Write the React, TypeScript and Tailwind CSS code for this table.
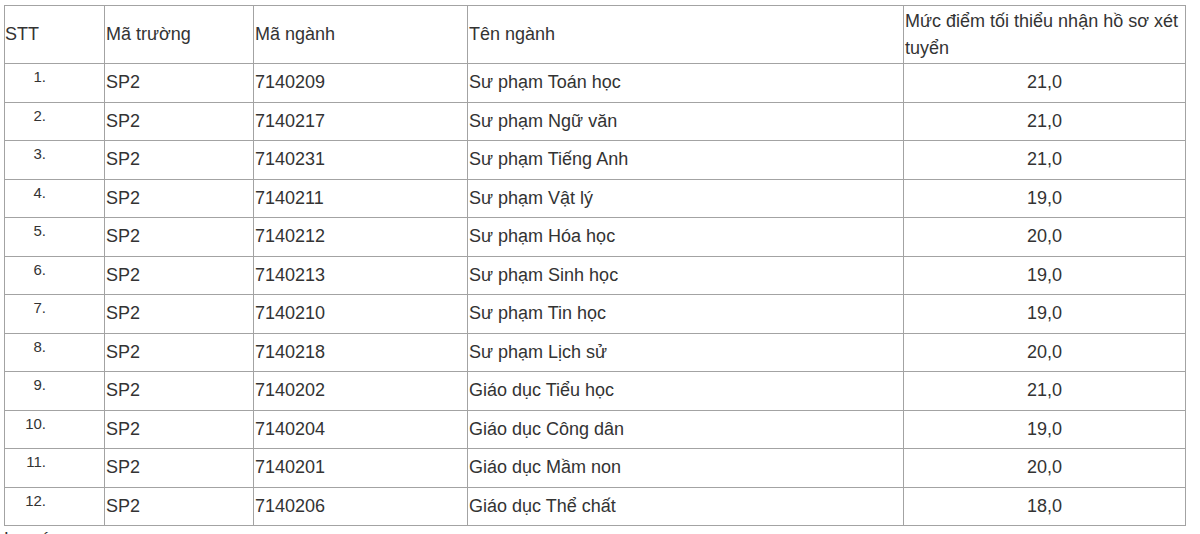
import React from "react";

const rows: [string, string, string, string][] = [
  ["1.", "7140209", "Sư phạm Toán học", "21,0"],
  ["2.", "7140217", "Sư phạm Ngữ văn", "21,0"],
  ["3.", "7140231", "Sư phạm Tiếng Anh", "21,0"],
  ["4.", "7140211", "Sư phạm Vật lý", "19,0"],
  ["5.", "7140212", "Sư phạm Hóa học", "20,0"],
  ["6.", "7140213", "Sư phạm Sinh học", "19,0"],
  ["7.", "7140210", "Sư phạm Tin học", "19,0"],
  ["8.", "7140218", "Sư phạm Lịch sử", "20,0"],
  ["9.", "7140202", "Giáo dục Tiểu học", "21,0"],
  ["10.", "7140204", "Giáo dục Công dân", "19,0"],
  ["11.", "7140201", "Giáo dục Mầm non", "20,0"],
  ["12.", "7140206", "Giáo dục Thể chất", "18,0"],
];

const cell = "border-r border-b border-[#a3a3a3] flex items-center pl-[1px]";

export default function App() {
  return (
    <div
      className="w-[1200px] h-[534px] overflow-hidden bg-white pt-[5px] pl-[4px] text-[#333333] text-[18px] leading-[27px]"
      style={{ fontFamily: '"Liberation Sans", Arial, sans-serif' }}
    >
      <div className="grid grid-cols-[100px_149px_214px_436px_282px] w-[1182px] border-l border-t border-[#a3a3a3]">
        <div className={`${cell} h-[58px] !pl-0`}>STT</div>
        <div className={`${cell} h-[58px]`}>Mã trường</div>
        <div className={`${cell} h-[58px]`}>Mã ngành</div>
        <div className={`${cell} h-[58px]`}>Tên ngành</div>
        <div className={`${cell} h-[58px]`}>
          <span>Mức điểm tối thiểu nhận hồ sơ xét tuyển</span>
        </div>
        {rows.map((r, i) => {
          const h = i % 2 === 0 ? "h-[39px]" : "h-[38px]";
          return (
            <React.Fragment key={i}>
              <div className={`border-r border-b border-[#a3a3a3] ${h} flex items-start pt-[4px]`}>
                <span className="w-[41px] text-right text-[15px] leading-[17px]">{r[0]}</span>
              </div>
              <div className={`${cell} ${h} pb-[1px]`}>SP2</div>
              <div className={`${cell} ${h} pb-[1px]`}>{r[1]}</div>
              <div className={`${cell} ${h} pb-[1px]`}>{r[2]}</div>
              <div className={`${cell} ${h} pb-[1px] justify-center !pl-0`}>{r[3]}</div>
            </React.Fragment>
          );
        })}
      </div>
      <div className="mt-[3px] leading-[21px]">Lưu ý:</div>
    </div>
  );
}
